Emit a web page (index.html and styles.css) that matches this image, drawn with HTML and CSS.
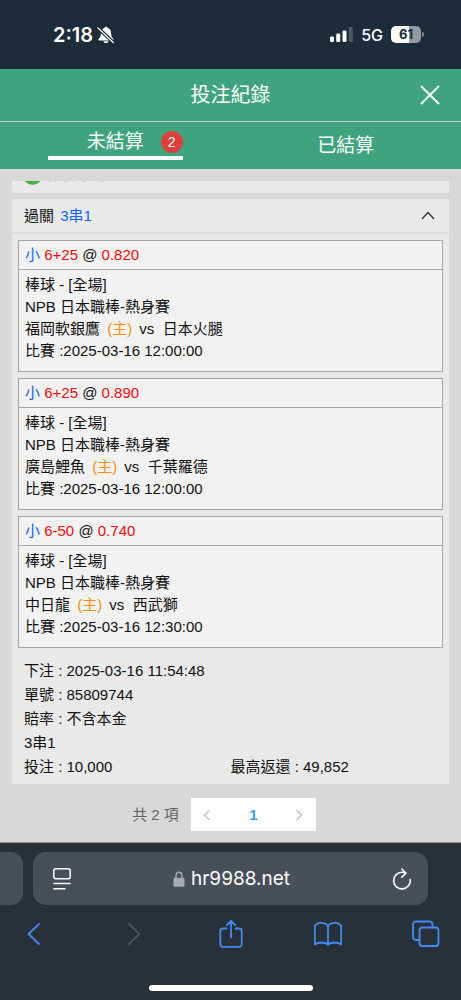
FILE: index.html
```html
<!DOCTYPE html>
<html lang="zh-Hant">
<head>
<meta charset="utf-8">
<meta name="viewport" content="width=device-width, initial-scale=1">
<title>投注紀錄</title>
<link rel="stylesheet" href="styles.css">
</head>
<body>
<div class="status">
  <div class="status-left">
    <span class="clock">2:18</span>
    <svg width="18" height="18" viewBox="0 0 18 18" aria-hidden="true">
      <path fill="#fff" d="M9 .8c-.9 0-1.6.6-1.7 1.3C5 2.8 3.900 4.700 3.900 7c0 2.800-.6 3.900-1.500 4.900-.6.700-1.100 1.200-1.100 1.800 0 .5.400.8 1 .8h13.400c.6 0 1-.3 1-.8 0-.6-.5-1.100-1.100-1.800-.9-1-1.500-2.100-1.500-4.900 0-2.300-1.100-4.200-3.400-4.900C10.600 1.400 9.900.8 9 .8zM6.500 15.300h5c-.2 1.200-1.200 2-2.500 2s-2.300-.8-2.500-2z"/>
      <path stroke="#1c2c3b" stroke-width="3.600" d="M.5 1.500l16 15"/>
      <path stroke="#fff" stroke-width="1.300" stroke-linecap="round" d="M1 2l15.300 14.500"/>
    </svg>
  </div>
  <div class="status-right">
    <svg width="23" height="15" viewBox="0 0 23 15" aria-hidden="true">
      <g fill="#fff"><rect y="9.500" width="4" height="5.500" rx="1.200"/><rect x="6.200" y="6.500" width="4" height="8.500" rx="1.200"/><rect x="12.500" y="3.500" width="4" height="11.500" rx="1.200"/></g>
      <rect x="18.800" width="4" height="15" rx="1.200" fill="#4d5965"/>
    </svg>
    <span class="network">5G</span>
    <span class="battery"><span class="battery-level">61</span></span>
  </div>
</div>

<header class="header">
  <h1>投注紀錄</h1>
  <button class="close" type="button" aria-label="關閉">
    <svg width="20" height="20" viewBox="0 0 20 20" aria-hidden="true"><path d="M1 1l18 18M19 1L1 19" stroke="#fff" stroke-width="1.800"/></svg>
  </button>
</header>

<nav class="tabs">
  <a class="tab tab-active" href="#open"><span class="tab-label">未結算<span class="badge">2</span></span></a>
  <a class="tab" href="#settled"><span class="tab-label">已結算</span></a>
</nav>

<main class="content">
  <div class="scrolled">
    <svg width="90" height="4" viewBox="0 0 90 4" aria-hidden="true">
      <path d="M0 0h15.500Q12 3.800 7.500 3.800T0 0z" fill="#45b14d"/>
      <path d="M26 0l-2 1M30 0v1M38 0h4M48 0h2M57 0h3M75 0h3" stroke="#a9c0ef"/>
    </svg>
  </div>

  <section class="bet">
    <div class="bet-head">
      <h2>過關 <span class="pick">3串1</span></h2>
      <button class="toggle" type="button" aria-label="收合">
        <svg width="14" height="9" viewBox="0 0 14 9" aria-hidden="true"><path d="M1 8l6-6.500L13 8" fill="none" stroke="#333" stroke-width="1.300"/></svg>
      </button>
    </div>
    <div class="legs">
      <article class="leg">
        <h3><span class="pick">小</span> <span class="odds">6+25</span> @ <span class="odds">0.820</span></h3>
        <div class="leg-body">
          <p>棒球 - [全場]</p>
          <p>NPB 日本職棒-熱身賽</p>
          <p>福岡軟銀鷹 <span class="home">(主)</span> vs&nbsp; 日本火腿</p>
          <p>比賽 :2025-03-16 12:00:00</p>
        </div>
      </article>
      <article class="leg">
        <h3><span class="pick">小</span> <span class="odds">6+25</span> @ <span class="odds">0.890</span></h3>
        <div class="leg-body">
          <p>棒球 - [全場]</p>
          <p>NPB 日本職棒-熱身賽</p>
          <p>廣島鯉魚 <span class="home">(主)</span> vs&nbsp; 千葉羅德</p>
          <p>比賽 :2025-03-16 12:00:00</p>
        </div>
      </article>
      <article class="leg">
        <h3><span class="pick">小</span> <span class="odds">6-50</span> @ <span class="odds">0.740</span></h3>
        <div class="leg-body">
          <p>棒球 - [全場]</p>
          <p>NPB 日本職棒-熱身賽</p>
          <p>中日龍 <span class="home">(主)</span> vs&nbsp; 西武獅</p>
          <p>比賽 :2025-03-16 12:30:00</p>
        </div>
      </article>
    </div>
    <div class="summary">
      <p>下注 : 2025-03-16 11:54:48</p>
      <p>單號 : 85809744</p>
      <p>賠率 : 不含本金</p>
      <p>3串1</p>
      <div class="amounts"><p>投注 : 10,000</p><p>最高返還 : 49,852</p></div>
    </div>
  </section>

  <div class="pagination">
    <span>共 2 項</span>
    <div class="pager">
      <button type="button" aria-label="上一頁"><svg width="8" height="12" viewBox="0 0 8 12" aria-hidden="true"><path d="M6.500 1L1.500 6l5 5"/></svg></button>
      <button class="current" type="button">1</button>
      <button type="button" aria-label="下一頁"><svg width="8" height="12" viewBox="0 0 8 12" aria-hidden="true"><path d="M1.500 1l5 5-5 5"/></svg></button>
    </div>
  </div>
</main>

<footer class="browser">
  <div class="address-row">
    <div class="neighbor"></div>
    <div class="address">
      <button type="button" aria-label="頁面選單">
        <svg width="18" height="22" viewBox="0 0 18 22" fill="none" stroke="#fff" stroke-width="1.500" stroke-linecap="round" aria-hidden="true"><rect x=".8" y=".8" width="16.400" height="10" rx="2"/><path d="M.8 15.600h16.400M.8 20.800h11.200"/></svg>
      </button>
      <a class="url" href="#top">
        <svg width="12" height="16" viewBox="0 0 12 16" aria-hidden="true"><rect x=".5" y="6.800" width="11" height="9" rx="1.600" fill="#a7abb5"/><path d="M3 7V4.200a3 3 0 0 1 6 0V7" fill="none" stroke="#a7abb5" stroke-width="1.400"/></svg>
        hr9988.net
      </a>
      <button type="button" aria-label="重新載入">
        <svg width="20" height="22" viewBox="0 0 20 22" fill="none" stroke="#fff" stroke-width="1.600" stroke-linecap="round" stroke-linejoin="round" aria-hidden="true"><path d="M18.200 11.500A8.300 8.300 0 1 1 10 4.300q2 0 3.300.6M9.800 1l4.200 4.200-4.200 4"/></svg>
      </button>
    </div>
  </div>
  <div class="toolbar">
    <button type="button" aria-label="返回"><svg width="28" height="28" viewBox="0 0 28 28" aria-hidden="true"><path d="M18 4L7.500 14 18 24"/></svg></button>
    <button class="disabled" type="button" aria-label="前進" disabled><svg width="28" height="28" viewBox="0 0 28 28" aria-hidden="true"><path d="M10 4l10.500 10L10 24"/></svg></button>
    <button type="button" aria-label="分享"><svg width="28" height="28" viewBox="0 0 28 28" aria-hidden="true"><path d="M9.500 8.500H5.800a2.500 2.500 0 0 0-2.500 2.500v13.300a2.500 2.500 0 0 0 2.500 2.500h16.400a2.500 2.500 0 0 0 2.500-2.500V11a2.500 2.500 0 0 0-2.500-2.500h-3.700M14 17.500V1M9.800 5L14 .9 18.200 5"/></svg></button>
    <button type="button" aria-label="書籤"><svg width="28" height="28" viewBox="0 0 28 28" aria-hidden="true"><path d="M14 24.500V6C12.500 3.500 10 2.800 7.500 2.800S2 3.800.8 6v18.500C4 21.800 11 21.800 14 24.500c3-2.700 10-2.700 13.200 0V6C26 3.800 23 2.800 20.500 2.800S15.500 3.500 14 6"/></svg></button>
    <button type="button" aria-label="分頁"><svg width="28" height="28" viewBox="0 0 28 28" aria-hidden="true"><rect x="7.500" y="7.500" width="19" height="18.500" rx="3"/><path d="M7.500 20H4a3 3 0 0 1-3-3V4.500a3 3 0 0 1 3-3h13.500a3 3 0 0 1 3 3v3"/></svg></button>
  </div>
  <div class="home-indicator"></div>
</footer>
</body>
</html>
```
FILE: styles.css
```css
* { box-sizing: border-box; }

body {
  margin: 0;
  min-height: 100vh;
  display: flex;
  flex-direction: column;
  background: #d8d8d8;
  color: #111;
  font: 15px/22px "Liberation Sans", "Noto Sans CJK TC", sans-serif;
}

h1, h2, h3, p { margin: 0; font-size: inherit; font-weight: 400; }

button {
  padding: 0;
  border: 0;
  background: none;
  color: inherit;
  font: inherit;
}

a { color: inherit; text-decoration: none; }
svg { display: block; flex: none; }

.status {
  display: flex;
  align-items: center;
  justify-content: space-between;
  height: 69px;
  padding: 0 40px 0 53px;
  background: #1c2c3b;
  color: #fff;
  font-family: Inter, "Liberation Sans", sans-serif;
}
.status-left, .status-right { display: flex; align-items: center; }
.status-left { gap: 4px; }
.status-right { gap: 8px; }
.clock { font-size: 20px; font-weight: 600; }
.network { font-size: 16px; font-weight: 500; }
.battery {
  position: relative;
  width: 30px;
  height: 17px;
  border-radius: 5px;
  background: linear-gradient(90deg, #fff 61%, #929aa2 61%);
  color: #1c2c3b;
  font-size: 13px;
  font-weight: 700;
  line-height: 17px;
  text-align: center;
}
.battery::after {
  content: "";
  position: absolute;
  top: 6px;
  right: -3px;
  width: 2px;
  height: 5px;
  border-radius: 0 2px 2px 0;
  background: #7d8790;
}

.header {
  display: grid;
  grid-template-columns: 20px 1fr 20px;
  align-items: center;
  height: 53px;
  padding: 0 21px;
  border-bottom: 1px solid #b4d9ca;
  background: #40a380;
  color: #fff;
}
.header h1 {
  grid-column: 2;
  font-size: 20px;
  line-height: 30px;
  text-align: center;
}

.tabs {
  display: grid;
  grid-template-columns: 1fr 1fr;
  height: 47px;
  background: #40a380;
  color: #fff;
  font-size: 19px;
}
.tab { display: flex; align-items: center; justify-content: center; }
.tab-label { position: relative; }
.tab-active {
  margin: 0 48px 9px;
  padding-top: 6px;
  border-bottom: 4px solid #fff;
}
.badge {
  position: absolute;
  top: 0;
  left: calc(100% + 17px);
  width: 22px;
  height: 22px;
  border-radius: 50%;
  background: #dc3f3a;
  font-size: 14px;
  text-align: center;
}

.content { flex: 1; padding: 12px 12px 11px; }
.scrolled {
  height: 12px;
  margin-bottom: 6px;
  padding-left: 13px;
  background: #e9e9e9;
}

.bet { background: #e9e9e9; }
.bet-head {
  display: flex;
  align-items: center;
  justify-content: space-between;
  height: 35px;
  padding: 0 14px 0 12px;
  border-bottom: 2px solid #dcdcdc;
}
.pick { color: #0a66ff; }
.bet-head .pick { margin-left: 2px; }
.odds { color: #ff0a0a; }
.home { margin: 0 3px; color: #ff8c0a; }

.legs { display: grid; gap: 6px; padding: 6px 6px 0; }
.leg { border: 1px solid #a6a6a6; background: #f2f2f2; }
.leg h3 {
  padding: 3px 6px;
  border-bottom: 1px solid #a6a6a6;
}
.leg-body { padding: 4px 6px 9px; }

.summary { padding: 11px 12px 5px; line-height: 24px; }
.amounts { display: grid; grid-template-columns: 1fr 1fr; }

.pagination {
  display: flex;
  align-items: center;
  justify-content: center;
  gap: 12px;
  padding: 14px 13px 0 0;
  color: #606266;
}
.pager {
  display: grid;
  grid-template-columns: 33px 1fr 33px;
  width: 125px;
  height: 33px;
  background: #fff;
}
.pager button { display: grid; place-items: center; }
.pager path { fill: none; stroke: #c0c4cc; stroke-width: 1.5; }
.pager .current { color: #409eff; font-weight: 700; }

.browser {
  padding-bottom: 9px;
  border-top: 1px solid #8b8e90;
  background: #28303a;
  color: #fff;
}
.address-row { display: flex; gap: 10px; padding: 9px 33px 0 0; }
.neighbor {
  width: 23px;
  border-radius: 0 12px 12px 0;
  background: #484f58;
}
.address {
  display: flex;
  flex: 1;
  align-items: center;
  justify-content: space-between;
  height: 53px;
  padding: 0 16px 0 20px;
  border-radius: 13px;
  background: #484f58;
}
.url {
  display: flex;
  align-items: center;
  gap: 6px;
  font: 19px/24px Inter, "Liberation Sans", sans-serif;
}
.toolbar {
  display: flex;
  justify-content: space-between;
  padding: 15px 21px 0;
}
.toolbar svg { fill: none; stroke: #3f8cf7; stroke-width: 1.8; stroke-linecap: round; stroke-linejoin: round; }
.toolbar .disabled svg { stroke: #4d545c; }
.home-indicator {
  width: 164px;
  height: 6px;
  margin: 37px auto 0;
  border-radius: 3px;
  background: #fff;
}
```
